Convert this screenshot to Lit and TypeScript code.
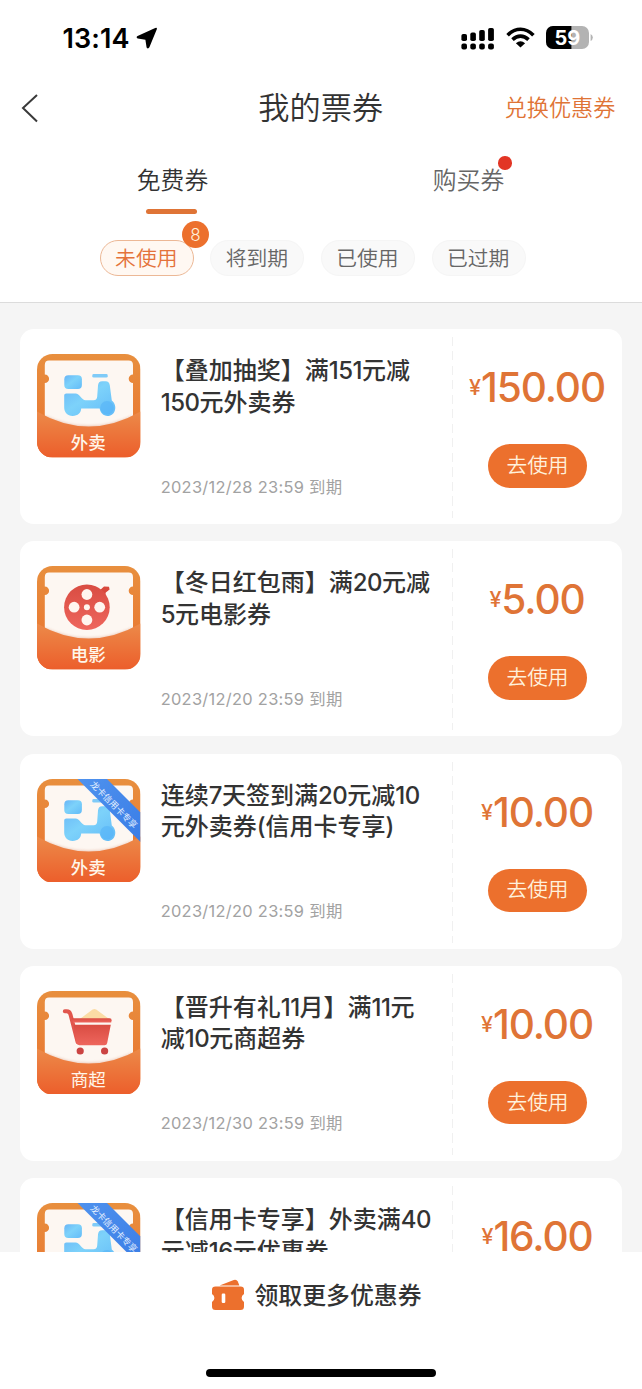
import { LitElement, html, css, svg, nothing } from "lit";
import { customElement, property } from "lit/decorators.js";

type Kind = "takeout" | "movie" | "market";

interface Coupon {
  kind: Kind;
  exclusive?: boolean;
  title: [string, string];
  expiry: string;
  amount: string;
}

const COUPONS: Coupon[] = [
  { kind: "takeout", title: ["【叠加抽奖】满151元减", "150元外卖券"], expiry: "2023/12/28 23:59", amount: "150.00" },
  { kind: "movie", title: ["【冬日红包雨】满20元减", "5元电影券"], expiry: "2023/12/20 23:59", amount: "5.00" },
  { kind: "takeout", exclusive: true, title: ["连续7天签到满20元减10", "元外卖券(信用卡专享)"], expiry: "2023/12/20 23:59", amount: "10.00" },
  { kind: "market", title: ["【晋升有礼11月】满11元", "减10元商超券"], expiry: "2023/12/30 23:59", amount: "10.00" },
  { kind: "takeout", exclusive: true, title: ["【信用卡专享】外卖满40", "元减16元优惠券"], expiry: "2023/12/30 23:59", amount: "16.00" },
];

const LABELS: Record<Kind, string> = { takeout: "外卖", movie: "电影", market: "商超" };

@customElement("coupon-icon")
class CouponIcon extends LitElement {
  @property() kind: Kind = "takeout";
  @property({ type: Boolean }) exclusive = false;

  static styles = css`
    :host { display: block; width: 103.5px; height: 103.5px; }
    .art { display: block; width: 100%; height: 100%; }
    .label { font: 500 17.5px "Noto Sans CJK SC", sans-serif; fill: #fff6ea; }
    .label.thin { font-weight: 400; }
    .ribbon { font: 400 8.9px "Noto Sans CJK SC", sans-serif; fill: #e6f1ff; }
  `;

  private takeout() {
    return svg`
      <rect x="27.3" y="21.3" width="17.6" height="13.8" rx="4" fill="url(#sky)"/>
      <rect x="55.3" y="20" width="15.4" height="3.6" rx="1.4" fill="#7fcbf8"/>
      <path fill="url(#sky)" d="M29.4 39.4H38.6C42.6 39.4 44.4 45.8 48.6 46.2H56.6C59 46.2 60 45 60.2 42.6L61 31.6C61.2 28.6 62.6 27.2 65.2 27.2H68.6C71 27.2 72.4 28.6 72.8 31.2L74.8 46.4C81 51 78.6 62 70.6 62C66 62 63.6 59 62.6 54.6H44.2C44 58.8 41 62 35.6 62C30.4 62 27.2 58.4 27.2 53.6V41.6C27.2 40.2 28 39.4 29.4 39.4Z"/>
      <circle cx="70" cy="53.8" r="6.8" fill="#4fb0f8" opacity=".5"/>`;
  }

  private movie() {
    return svg`
      <path d="M62 25L67 20.4L72 20.8L72.6 23.4L68.8 26.6L67.4 32Z" fill="#d8483c"/>
      <circle cx="49.9" cy="41.2" r="22.8" fill="url(#red)"/>
      <g fill="#fff5ef"><circle cx="49.9" cy="28.5" r="5.4"/><circle cx="49.9" cy="54" r="5.4"/><circle cx="37.1" cy="41.2" r="5.4"/><circle cx="62.7" cy="41.2" r="5.4"/><circle cx="49.9" cy="41.2" r="3"/></g>`;
  }

  private market() {
    return svg`
      <path d="M42 28.6L55.6 18.6Q57.4 17.2 59.2 18.6L73 28.6Z" fill="#fbdca5"/>
      <path d="M27.8 20.2H29.6C31.8 20.2 32.8 21.2 33.4 23.2L40.6 51" fill="none" stroke="#e1564d" stroke-width="4" stroke-linecap="round" stroke-linejoin="round"/>
      <path d="M35 27.2H72.6Q74.8 27.2 74.6 29.2L74.2 31.6H36Z" fill="url(#red)"/>
      <path d="M36.6 33.8H73.8L70.2 52Q69.8 54.2 67.6 54.2H42.4Q39.8 54.2 39.2 51.6Z" fill="url(#red)"/>
      <circle cx="43.2" cy="60" r="3.6" fill="#cb4443"/><circle cx="67.6" cy="60" r="3.6" fill="#cb4443"/>`;
  }

  render() {
    const art = this.kind === "takeout" ? this.takeout() : this.kind === "movie" ? this.movie() : this.market();
    return html`
      <svg class="art" viewBox="0 0 103.5 103.5">
        <defs>
          <linearGradient id="back" x2="0" y2="1"><stop stop-color="#e88f3e"/><stop offset="1" stop-color="#e9702e"/></linearGradient>
          <linearGradient id="front" x2="0" y2="1"><stop stop-color="#ec8a49"/><stop offset="1" stop-color="#ec5e2b"/></linearGradient>
          <linearGradient id="sky" x2="1" y2="1"><stop stop-color="#68b5f7"/><stop offset=".45" stop-color="#7dd2fa"/><stop offset="1" stop-color="#63bbf8"/></linearGradient>
          <linearGradient id="red" x2="0" y2="1"><stop stop-color="#d94c42"/><stop offset="1" stop-color="#ee665d"/></linearGradient>
          <linearGradient id="blue" x2="1" y2="1"><stop stop-color="#4f92ee"/><stop offset="1" stop-color="#3a7de6"/></linearGradient>
          <filter id="soft" x="-20%" y="-20%" width="140%" height="140%"><feGaussianBlur stdDeviation="1.6"/></filter>
          <clipPath id="tile"><rect width="103.5" height="103.5" rx="15.5"/></clipPath>
        </defs>
        <g clip-path="url(#tile)">
          <rect width="103.5" height="103.5" fill="url(#back)"/>
          <path fill="#fdf7f2" d="M12 6.6H91.6Q96 6.6 96 11V20.4A4.3 4.3 0 0 0 96 29V80H7.8V29A4.3 4.3 0 0 0 7.8 20.4V11Q7.8 6.6 12 6.6Z"/>
          ${art}
          <path d="M8 62Q51.75 82 95.6 62V76H8Z" fill="#c96a45" opacity=".4" filter="url(#soft)"/>
          <path d="M0 57.5Q51.75 87.5 103.5 57.5V103.5H0Z" fill="url(#front)"/>
          <text class="label ${this.kind === "market" ? "thin" : ""}" x="51.2" y="94.8" text-anchor="middle">${LABELS[this.kind]}</text>
          ${this.exclusive
            ? svg`<path d="M40.5 0H70L103.5 33.5V63Z" fill="url(#blue)"/>
                <text class="ribbon" transform="translate(74.6 28) rotate(45)" text-anchor="middle">龙卡信用卡专享</text>`
            : nothing}
        </g>
      </svg>`;
  }
}

@customElement("coupon-card")
class CouponCard extends LitElement {
  @property({ attribute: false }) coupon!: Coupon;

  static styles = css`
    :host { display: flex; flex: none; box-sizing: border-box; width: 601.5px; height: 195px; background: #fff; border-radius: 14px; }
    .icon { flex: none; margin: 25.2px 0 0 17.2px; }
    .body { display: flex; flex-direction: column; justify-content: space-between; width: 291.3px; margin-left: 20px; padding: 26px 0 24.5px; box-sizing: border-box; }
    .title { font-size: 24px; font-weight: 500; line-height: 31.5px; color: #333; white-space: nowrap; }
    .line { display: block; }
    .num { letter-spacing: -.5px; }
    .expiry { font-size: 16.4px; line-height: 26px; color: #a2a2a2; white-space: nowrap; font-weight: 370; letter-spacing: .3px; }
    .divider { flex: none; width: 1.5px; margin: 8px 0 6px; background: repeating-linear-gradient(#f0f0f0 0 9px, transparent 9px 14.5px); }
    .action { display: flex; flex-direction: column; align-items: center; flex: 1; padding: 34px 0 0; }
    .price { display: flex; align-items: flex-start; font-weight: 550; font-size: 40.6px; line-height: 50px; height: 50px; margin-right: 1px; color: #df7436; white-space: nowrap; }
    .amount { letter-spacing: -1.1px; }
    .yen { font-size: 21.5px; line-height: 48px; font-weight: 500; }
    .use { display: flex; align-items: center; justify-content: center; width: 99px; height: 43.5px; margin-top: 31px; border-radius: 22px; background: #ec702d; color: #fff1dc; font-size: 20.7px; font-weight: 350; line-height: 30px; }
  `;

  private line(text: string) {
    return text.split(/(\d+)/).map((part) => (/^\d/.test(part) ? html`<span class="num">${part}</span>` : part));
  }

  render() {
    const c = this.coupon;
    return html`
      <coupon-icon class="icon" .kind=${c.kind} .exclusive=${!!c.exclusive}></coupon-icon>
      <div class="body">
        <div class="title">${c.title.map((t) => html`<span class="line">${this.line(t)}</span>`)}</div>
        <div class="expiry">${c.expiry} 到期</div>
      </div>
      <div class="divider"></div>
      <div class="action">
        <div class="price"><span class="yen">¥</span><span class="amount">${c.amount}</span></div>
        <div class="use">去使用</div>
      </div>`;
  }
}

@customElement("app-root")
class AppRoot extends LitElement {
  static styles = css`
    :host { display: flex; flex-direction: column; width: 642px; height: 1389px; overflow: hidden; background: #fff; color: #333; font-family: Inter, "Noto Sans CJK SC", sans-serif; }
    .header { flex: none; height: 303px; box-sizing: border-box; border-bottom: 1.5px solid #dcdcdc; }
    .status { display: flex; align-items: center; height: 75px; margin-bottom: 1px; padding: 0 49px 0 62.5px; box-sizing: border-box; color: #000; }
    .clock { font-size: 27px; font-weight: 600; line-height: 32px; letter-spacing: .1px; padding-top: 2px; }
    .arrow { margin: 1px 0 0 6.5px; }
    .system { display: flex; align-items: center; margin-left: auto; }
    .wifi { margin-left: 11px; }
    .battery { margin-left: 11px; }
    .pct { font: 700 20px Inter, sans-serif; fill: #fff; }
    .nav { display: grid; grid-template-columns: 1fr auto 1fr; align-items: center; height: 64px; padding: 0 26.5px 0 21px; }
    .heading { font-size: 31.2px; line-height: 46px; font-weight: 350; padding-left: 5px; }
    .exchange { justify-self: end; font-size: 22.2px; line-height: 32px; font-weight: 350; color: #df7436; }
    .tabs { display: grid; grid-template-columns: 1fr 1fr; width: 592px; margin: 0 auto; height: 76px; padding-top: 23px; box-sizing: border-box; }
    .tab { position: relative; display: flex; flex-direction: column; align-items: center; justify-self: center; font-size: 23.8px; line-height: 36px; font-weight: 350; color: #666; left: -.5px; }
    .tab.on { color: #333; }
    .bar { width: 51.5px; height: 5px; margin: 9.8px 2px 0 0; border-radius: 3px; background: #df7436; }
    .dot { position: absolute; top: -7px; right: -7.5px; width: 13.5px; height: 13.5px; border-radius: 50%; background: #e23524; }
    .chips { display: flex; gap: 16.6px; margin: 24px 0 0 99.8px; }
    .chip { position: relative; display: flex; align-items: center; justify-content: center; width: 94px; height: 36px; box-sizing: border-box; border: 1px solid #f5f5f5; border-radius: 18px; background: #f9f9f9; color: #666; font-size: 20.8px; line-height: 30px; font-weight: 350; padding: 1px 1px 0 0; }
    .chip.on { border: 1.5px solid #ecb896; background: #fff8f2; color: #e4723a; }
    .count { position: absolute; top: -20.5px; right: -16.5px; width: 27.5px; height: 27.5px; border-radius: 50%; background: #ec702d; color: #fff1dc; font-size: 17px; line-height: 28px; text-align: center; }
    .list { display: flex; flex-direction: column; gap: 17.25px; flex: 1; min-height: 0; overflow: hidden; padding: 26px 0 0 20px; background: #f5f5f5; }
    .footer { display: flex; flex-direction: column; align-items: center; justify-content: space-between; flex: none; height: 137px; padding: 24px 0 12px; box-sizing: border-box; background: #fff; }
    .more { display: flex; align-items: center; gap: 9px; margin-right: 9px; font-size: 23.9px; line-height: 38px; font-weight: 500; }
    .ticket { margin-bottom: 1.5px; }
    .more-text { padding-top: 1px; }
    .home { width: 230px; height: 8px; border-radius: 4px; background: #000; }
  `;

  render() {
    return html`
      <div class="header">
        <div class="status">
          <span class="clock">13:14</span>
          <svg class="arrow" width="22" height="22" viewBox="0 0 22 22"><path d="M19.2 1.1Q21.5.2 20.7 2.5L13.4 20.3Q12 22.4 10.6 20.4L9.4 12.8L1.8 11.4Q-.4 10.2 1.6 9Z"/></svg>
          <div class="system">
            <svg width="34" height="24" viewBox="0 0 34 24">
              <rect x=".4" y="8" width="5.6" height="7" rx="1.8"/><rect x="9.3" y="6.6" width="5.6" height="8.4" rx="1.8"/><rect x="18.2" y="4" width="5.6" height="11" rx="1.8"/><rect x="27.1" y="2" width="5.8" height="13" rx="1.8"/>
              <rect x=".4" y="17.6" width="5.6" height="6" rx="2"/><rect x="9.3" y="17.6" width="5.6" height="6" rx="2"/><rect x="18.2" y="17.6" width="5.6" height="6" rx="2"/><rect x="27.1" y="17.6" width="5.8" height="6" rx="2"/>
            </svg>
            <svg class="wifi" width="29" height="22" viewBox="0 0 29 22" fill="none" stroke="#000" stroke-width="3.6"><path d="M1.6 8.2Q7.4 2.2 14.5 2.2T27.4 8.2"/><path d="M6.5 12.6Q10.2 9.1 14.5 9.1T22.5 12.6"/><path d="M14.5 20.6L9.9 16.2Q14.5 12.4 19.1 16.2Z" fill="#000" stroke="none"/></svg>
            <svg class="battery" width="47" height="23" viewBox="0 0 47 23">
              <defs><clipPath id="cell"><rect width="43" height="23" rx="7"/></clipPath></defs>
              <g clip-path="url(#cell)"><rect width="43" height="23" fill="#b3b3b3"/><rect width="25.4" height="23"/></g>
              <path d="M44.6 8Q46.8 9 46.8 11.5T44.6 15Z" fill="#b3b3b3"/>
              <text class="pct" x="21.4" y="18.8" text-anchor="middle">59</text>
            </svg>
          </div>
        </div>
        <div class="nav">
          <svg width="18" height="30" viewBox="0 0 18 30" fill="none" stroke="#3a3a3a" stroke-width="2"><path d="M16 2L2 15L16 28.5"/></svg>
          <span class="heading">我的票券</span>
          <span class="exchange">兑换优惠券</span>
        </div>
        <div class="tabs">
          <div class="tab on">免费券<span class="bar"></span></div>
          <div class="tab">购买券<span class="dot"></span></div>
        </div>
        <div class="chips">
          <div class="chip on">未使用<span class="count">8</span></div>
          <div class="chip">将到期</div>
          <div class="chip">已使用</div>
          <div class="chip">已过期</div>
        </div>
      </div>
      <div class="list">${COUPONS.map((c) => html`<coupon-card .coupon=${c}></coupon-card>`)}</div>
      <div class="footer">
        <div class="more">
          <svg class="ticket" width="34" height="32" viewBox="0 0 34 32">
            <path d="M8.6 6.4L22.8 1Q25.6.2 26.8 2.4L28.4 6.4Z" fill="#ec702d"/>
            <path d="M4.5 7.4H29.5Q33 7.4 33 10.7V15Q30.6 16.4 30.6 19T33 23V27.5Q33 31 29.5 31H4.5Q1 31 1 27.5V23Q3.4 21.6 3.4 19T1 15V10.7Q1 7.4 4.5 7.4Z" fill="#ec702d"/>
            <rect x="10.7" y="14.6" width="3.6" height="9.4" rx="1.2" fill="#fff"/>
          </svg>
          <span class="more-text">领取更多优惠券</span>
        </div>
        <div class="home"></div>
      </div>`;
  }
}
